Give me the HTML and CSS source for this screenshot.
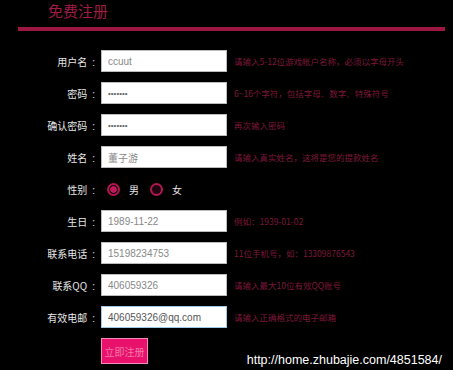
FILE: index.html
```html
<!DOCTYPE html>
<html lang="zh-CN">
  <head>
    <meta charset="UTF-8" />
    <meta name="viewport" content="width=device-width, initial-scale=1.0" />
    <title>免费注册</title>
    <link rel="stylesheet" href="styles.css">
  </head>
  <body>
    <div class="page">
      <h1 class="title">免费注册</h1>
      <div class="rule"></div>

      <form class="reg-form">
        <div class="row">
          <label class="label">用户名<span class="colon">:</span></label>
          <input type="text" class="field" value="ccuut" />
          <span class="hint">请输入5-12位游戏帐户名称，必须以字母开头</span>
        </div>
        <div class="row">
          <label class="label">密码<span class="colon">:</span></label>
          <input type="password" class="field pwd" value="1234567" />
          <span class="hint">6~16个字符，包括字母、数字、特殊符号</span>
        </div>
        <div class="row">
          <label class="label">确认密码<span class="colon">:</span></label>
          <input type="password" class="field pwd" value="1234567" />
          <span class="hint">再次输入密码</span>
        </div>
        <div class="row">
          <label class="label">姓名<span class="colon">:</span></label>
          <input type="text" class="field" value="董子游" />
          <span class="hint">请输入真实姓名，这将是您的提款姓名</span>
        </div>
        <div class="row">
          <label class="label">性别<span class="colon">:</span></label>
          <div class="sex">
            <label class="opt"><input type="radio" name="sex" class="radio" checked />男</label>
            <label class="opt"><input type="radio" name="sex" class="radio" />女</label>
          </div>
        </div>
        <div class="row">
          <label class="label">生日<span class="colon">:</span></label>
          <input type="text" class="field" value="1989-11-22" />
          <span class="hint">例如：1939-01-02</span>
        </div>
        <div class="row">
          <label class="label">联系电话<span class="colon">:</span></label>
          <input type="text" class="field" value="15198234753" />
          <span class="hint">11位手机号，如：13309876543</span>
        </div>
        <div class="row">
          <label class="label">联系QQ<span class="colon">:</span></label>
          <input type="text" class="field" value="406059326" />
          <span class="hint">请输入最大10位有效QQ账号</span>
        </div>
        <div class="row">
          <label class="label">有效电邮<span class="colon">:</span></label>
          <input type="text" class="field active" value="406059326@qq.com" />
          <span class="hint">请输入正确格式的电子邮箱</span>
        </div>
        <div class="row row-btn">
          <span class="label"></span>
          <button type="button" class="btn">立即注册</button>
        </div>
      </form>

      <div class="mark">http://home.zhubajie.com/4851584/</div>
    </div>
  </body>
</html>
```

FILE: styles.css
```css
body {
  margin: 0;
  background-color: #000;
  font-family: "Noto Sans CJK SC", "Liberation Sans", sans-serif;
}

.page {
  position: relative;
  width: 453px;
  height: 370px;
  overflow: hidden;
}

.title {
  margin: 0;
  padding: 1px 0 0 48px;
  height: 26px;
  font-size: 15px;
  font-weight: normal;
  line-height: 20px;
  color: #a01b46;
}

.rule {
  margin: 0 8px 0 18px;
  height: 4px;
  background-color: #9c1742;
}

.reg-form {
  padding-top: 19px;
}

.row {
  display: flex;
  align-items: center;
  height: 22px;
  margin-bottom: 10px;
}

.row-btn {
  height: auto;
  align-items: flex-start;
}

.label {
  width: 95px;
  margin-right: 6px;
  text-align: right;
  font-size: 10px;
  color: #e6e6e6;
}

.colon {
  margin-left: 5px;
  font-family: "Liberation Sans", sans-serif;
}

.field {
  box-sizing: border-box;
  width: 126px;
  height: 22px;
  margin: 0;
  padding: 0 6px;
  border: 1px solid #bbb;
  background-color: #fff;
  font-family: "Liberation Sans", "Noto Sans CJK SC", sans-serif;
  font-size: 10px;
  color: #888;
  outline: none;
}

.field.pwd {
  font-size: 8px;
  color: #666;
}

.field.active {
  border-color: #9ec9e8;
  color: #555;
}

.hint {
  margin-left: 7px;
  font-size: 8.5px;
  color: #7e1838;
  white-space: nowrap;
}

.sex {
  display: flex;
  align-items: center;
  gap: 11px;
  padding-left: 6px;
}

.opt {
  display: flex;
  align-items: center;
  gap: 9px;
  font-size: 10px;
  color: #e6e6e6;
}

.radio {
  appearance: none;
  -webkit-appearance: none;
  box-sizing: border-box;
  width: 13px;
  height: 13px;
  margin: 0;
  border: 2px solid #b3154f;
  border-radius: 50%;
  background-color: #1c0410;
}

.radio:checked {
  background: radial-gradient(circle, #c0185a 0 3px, #1c0410 3.5px);
}

.btn {
  box-sizing: border-box;
  width: 47px;
  height: 26px;
  margin: 0;
  padding: 0;
  border: 1px solid #f48cbb;
  background-color: #e8126c;
  font-family: "Noto Sans CJK SC", sans-serif;
  font-size: 10px;
  color: #f277a8;
  white-space: nowrap;
  cursor: pointer;
}

.mark {
  position: absolute;
  right: 11px;
  bottom: 3px;
  font-family: "Liberation Sans", sans-serif;
  font-size: 12.5px;
  color: #fff;
}
```
